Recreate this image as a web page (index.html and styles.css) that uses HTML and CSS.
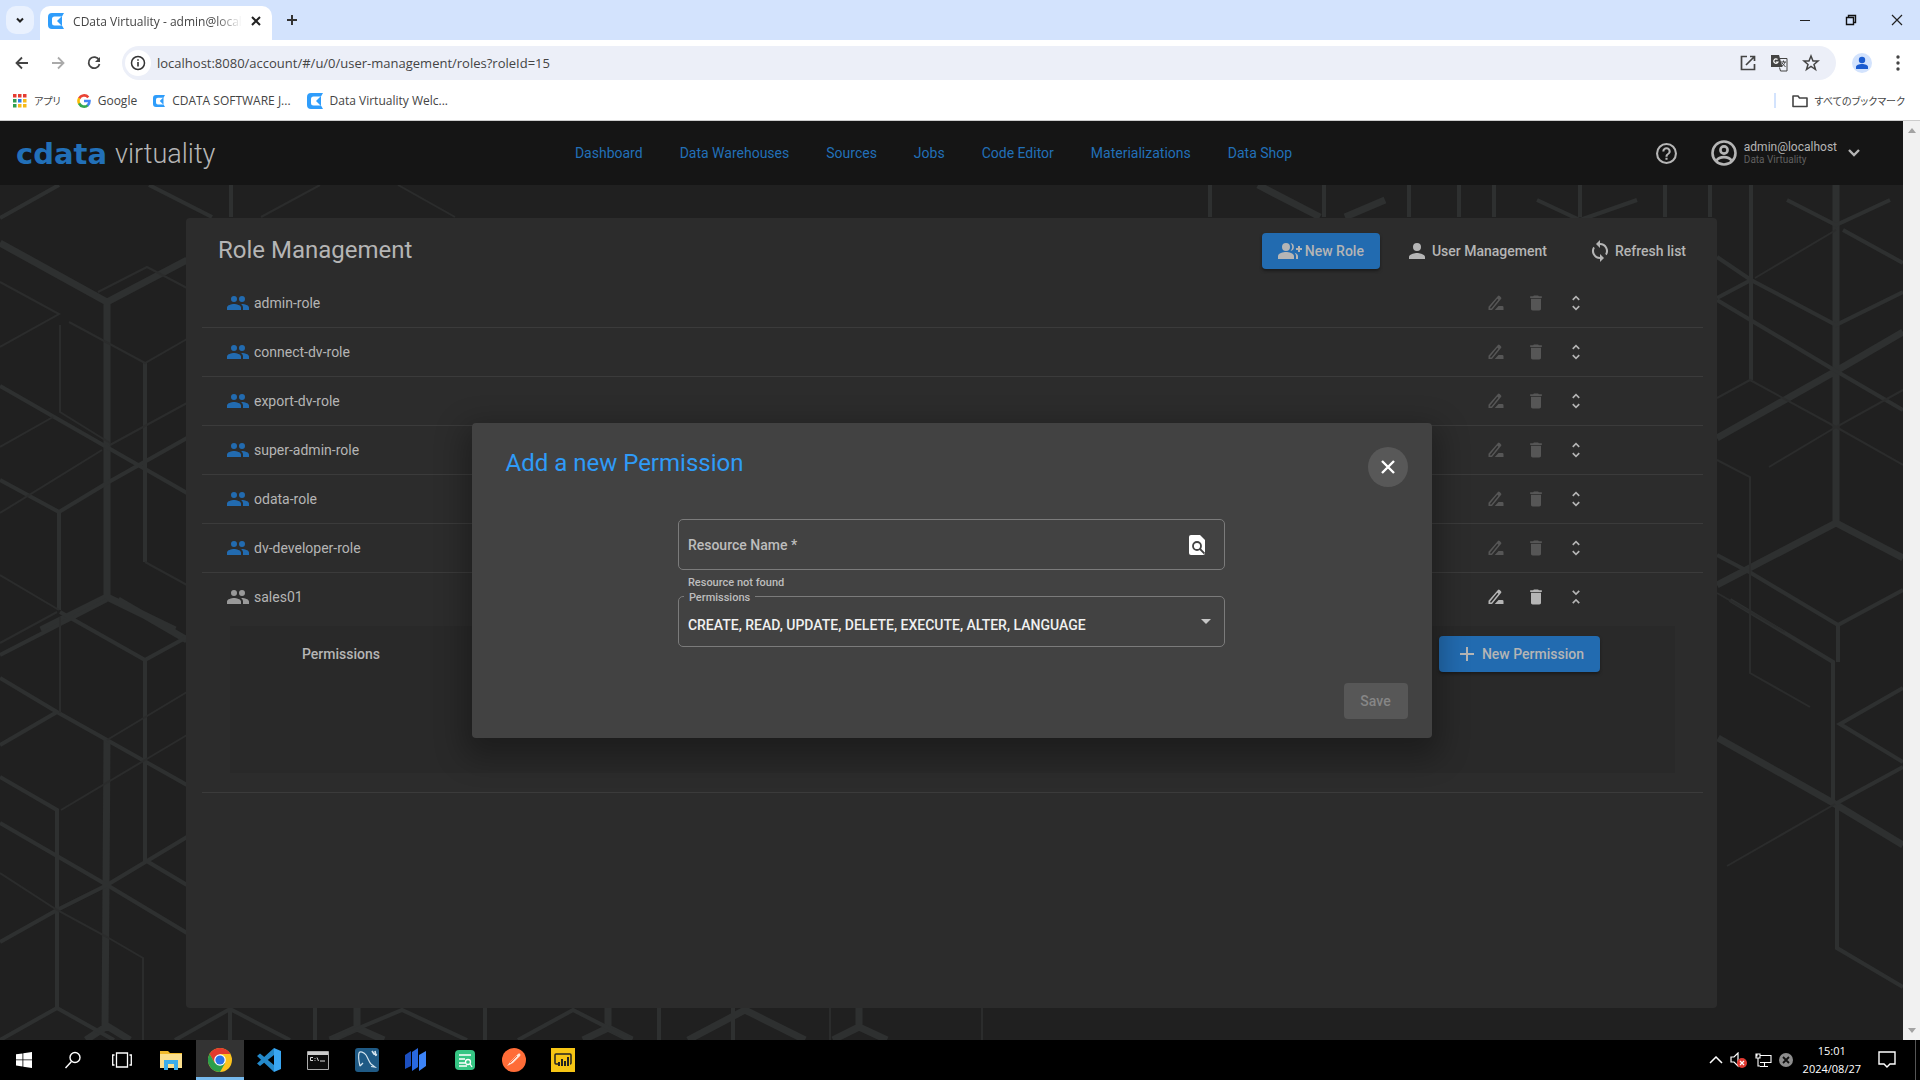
FILE: index.html
```html
<!DOCTYPE html>
<html lang="ja">
<head>
<meta charset="utf-8">
<meta name="viewport" content="width=device-width, initial-scale=1">
<title>CData Virtuality - admin@localhost</title>
<link rel="stylesheet" href="styles.css">
</head>
<body>
<svg class="defs" aria-hidden="true">
  <symbol id="i-people" viewBox="0 0 24 24"><path d="M16 11a3 3 0 1 0 0-6 3 3 0 0 0 0 6zm-8 0a3 3 0 1 0 0-6 3 3 0 0 0 0 6zm0 2c-2.330 0-7 1.170-7 3.500V19h14v-2.500C15 14.170 10.330 13 8 13zm8 0c-.290 0-.620.020-.970.050C16.190 13.890 17 15.020 17 16.500V19h6v-2.500c0-2.330-4.670-3.500-7-3.500z"/></symbol>
  <symbol id="i-addgroup" viewBox="0 0 24 24"><path d="M22 9V7h-2v2h-2v2h2v2h2v-2h2V9zM8 12a4 4 0 1 0 0-8 4 4 0 0 0 0 8zm0 1c-2.670 0-8 1.340-8 4v3h16v-3c0-2.660-5.330-4-8-4zm4.510-8.950a5.980 5.980 0 0 1 0 7.900 4 4 0 0 0 0-7.900zm4.020 9.780C17.420 14.660 18 15.700 18 17v3h2v-3c0-1.450-1.590-2.510-3.470-3.170z"/></symbol>
  <symbol id="i-person" viewBox="0 0 24 24"><path d="M12 12a4 4 0 1 0 0-8 4 4 0 0 0 0 8zm0 2c-2.670 0-8 1.340-8 4v2h16v-2c0-2.660-5.330-4-8-4z"/></symbol>
  <symbol id="i-sync" viewBox="0 0 24 24"><path d="M12 4V1L8 5l4 4V6a6 6 0 0 1 5.240 8.910l1.460 1.460A8 8 0 0 0 12 4zm0 14a6 6 0 0 1-5.240-8.910L5.300 7.630A8 8 0 0 0 12 20v3l4-4-4-4z"/></symbol>
  <symbol id="i-pencil" viewBox="0 0 24 24"><path fill-rule="evenodd" d="M14.300 3.500a1.500 1.500 0 0 1 2.100 0l1.600 1.600a1.500 1.500 0 0 1 0 2.100L7.200 20.500H3v-4zM5 17.300v1.300h1.400L14.900 8.200 13.500 6.800zM15 15.500h4.500a1.500 1.500 0 0 1 1.500 1.500v3.500H10.500z"/></symbol>
  <symbol id="i-trash" viewBox="0 0 24 24"><path d="M6 19c0 1.100.900 2 2 2h8c1.100 0 2-.900 2-2V7H6zM19 4h-3.500l-1-1h-5l-1 1H5v2h14z"/></symbol>
  <symbol id="i-more" viewBox="0 0 24 24"><path d="M12 5.830 15.170 9l1.410-1.410L12 3 7.410 7.590 8.830 9zm0 12.340L8.830 15l-1.410 1.410L12 21l4.590-4.590L15.170 15z"/></symbol>
  <symbol id="i-less" viewBox="0 0 24 24"><path d="M7.410 18.590 8.830 20 12 16.830 15.170 20l1.410-1.410L12 14zM16.590 5.410 15.170 4 12 7.170 8.830 4 7.410 5.410 12 10z"/></symbol>
  <symbol id="i-cdata" viewBox="0 0 16 16"><path fill="#2f9dfb" d="M4 0h12l-2 3.500H6.500A2.500 2.500 0 0 0 4 6v4a2.500 2.500 0 0 0 2.500 2.500H14l2 3.500H4a4 4 0 0 1-4-4V4a4 4 0 0 1 4-4z"/><path fill="#2f9dfb" d="M14 3v10L9 8z"/></symbol>
</svg>

<header class="browser">
  <div class="tabstrip">
    <button class="tabsearch" aria-label="Search tabs"><svg viewBox="0 0 12 12" width="12" height="12"><path d="m3 4.500 3 3 3-3" fill="none" stroke="#222" stroke-width="2"/></svg></button>
    <div class="tab">
      <svg width="16" height="16"><use href="#i-cdata"/></svg>
      <span class="tabtitle">CData Virtuality - admin@local</span>
      <button class="plain" aria-label="Close tab"><svg viewBox="0 0 10 10" width="10" height="10"><path d="m1 1 8 8m0-8L1 9" stroke="#222" stroke-width="2"/></svg></button>
    </div>
    <button class="plain newtab" aria-label="New tab"><svg viewBox="0 0 12 12" width="12" height="12"><path d="M6 1v10M1 6h10" stroke="#333" stroke-width="2"/></svg></button>
    <div class="winctl">
      <button class="plain" aria-label="Minimize"><svg width="12" height="12"><path d="M1 6.500h10" stroke="#222"/></svg></button>
      <button class="plain" aria-label="Restore"><svg width="12" height="12"><path d="M1.500 3.500h7v7h-7zM3.500 3V1.500h7v7H9" fill="none" stroke="#111" stroke-width="1.400"/></svg></button>
      <button class="plain" aria-label="Close"><svg width="12" height="12"><path d="m1 1 10 10m0-10L1 11" stroke="#222" stroke-width="1.200"/></svg></button>
    </div>
  </div>
  <div class="toolbar">
    <button class="plain" aria-label="Back"><svg width="16" height="16"><path d="M14 8H3m5-5.500L2.500 8 8 13.500" fill="none" stroke="#444" stroke-width="1.800"/></svg></button>
    <button class="plain" aria-label="Forward" disabled><svg width="16" height="16"><path d="M2 8h11M8 2.500 13.500 8 8 13.500" fill="none" stroke="#aaa" stroke-width="1.800"/></svg></button>
    <button class="plain" aria-label="Reload"><svg width="16" height="16"><path d="M13 5a5.500 5.500 0 1 0 .500 4" fill="none" stroke="#444" stroke-width="1.800"/><path d="M14 2v5H9z" fill="#444"/></svg></button>
    <div class="omnibox">
      <span class="siteinfo"><svg width="16" height="16"><circle cx="8" cy="8" r="6.500" fill="none" stroke="#333" stroke-width="1.500"/><path d="M8 7v4.500M8 4.200v1.600" stroke="#333" stroke-width="1.600"/></svg></span>
      <input class="url" aria-label="Address" value="localhost:8080/account/#/u/0/user-management/roles?roleId=15">
      <button class="plain" aria-label="Open"><svg width="16" height="16"><path d="M7 1.500H1.500v13h13V9M10 1.500h4.500V6M14 2 6 10" fill="none" stroke="#444" stroke-width="1.700"/></svg></button>
      <button class="plain" aria-label="Translate"><svg width="18" height="18"><path fill="#444" d="M1 1h8l3.500 12H1z"/><path d="M9.500 4.500H17V17h-6.500l-1-3.500" fill="none" stroke="#444"/><path d="M7.500 5.500A2.200 2.200 0 1 0 8 8H5.800" fill="none" stroke="#fff" stroke-width="1.200"/><path d="M11 8h5m-2.500-1.500V8m1.500 0c-.5 2-2 3.500-3 4m0-3 3.500 4" fill="none" stroke="#444"/></svg></button>
      <button class="plain" aria-label="Bookmark"><svg width="18" height="18"><path d="m9 2 2 5h5l-4 3.400 1.500 5.100L9 12.500l-4.500 3L6 10.400 2 7h5z" fill="none" stroke="#444" stroke-width="1.500"/></svg></button>
    </div>
    <button class="avatar" aria-label="Profile"><svg width="14" height="14" fill="#1b5cd0"><circle cx="7" cy="4" r="3.200"/><path d="M1 13v-2c0-2 3-3 6-3s6 1 6 3v2z"/></svg></button>
    <button class="plain dots" aria-label="Menu"><svg width="4" height="16" fill="#444"><circle cx="2" cy="2" r="1.700"/><circle cx="2" cy="8" r="1.700"/><circle cx="2" cy="14" r="1.700"/></svg></button>
  </div>
  <nav class="bookmarks" aria-label="Bookmarks">
    <a href="#apps"><svg width="14" height="14"><path fill="#e53b30" d="M0 0h3.500v3.500H0zM5 0h3.500v3.500H5zM10 0h3.500v3.500H10z"/><path fill="#2f9e50" d="M0 5h3.500v3.500H0zM0 10h3.500v3.500H0z"/><path fill="#2c7be5" d="M5 5h3.500v3.500H5z"/><path fill="#f5b919" d="M10 5h3.500v3.500H10zM5 10h3.500v3.500H5zM10 10h3.500v3.500H10z"/></svg><span class="jp">アプリ</span></a>
    <a href="#google"><svg width="14" height="14" fill="none" stroke-width="2.600"><path stroke="#ea4335" d="M11.300 3.300A5.500 5.500 0 0 0 2.100 4.600"/><path stroke="#fbbc05" d="M2.300 4.200a5.500 5.500 0 0 0 0 5.600"/><path stroke="#34a853" d="M2.100 9.400a5.500 5.500 0 0 0 8.800 1.700"/><path stroke="#4285f4" d="M7 7h5.500a5.500 5.500 0 0 1-1.900 4.400"/></svg>Google</a>
    <a href="#cdata"><svg width="12" height="12"><use href="#i-cdata"/></svg>CDATA SOFTWARE J...</a>
    <a href="#dv"><svg width="16" height="16"><use href="#i-cdata"/></svg>Data Virtuality Welc...</a>
    <a class="allmarks" href="#all"><svg width="16" height="14"><path d="M1 2h5l1.500 2H15v8.500H1z" fill="none" stroke="#444" stroke-width="1.600" stroke-linejoin="round"/></svg><span class="jp">すべてのブックマーク</span></a>
  </nav>
</header>

<div class="viewport">
  <div class="app">
    <svg class="pattern" viewBox="0 185 1903 855" preserveAspectRatio="xMidYMid slice" aria-hidden="true">
      <g class="thick">
        <path d="M0 243 107 302 187 260M107 302V597M41 630 107 597 175 630M118 600 187 640M107 740 105 1030M86 1040 107 1026 130 1040M1717 585 1836 523 1903 558M1718 738 1835 804 1903 845M1836 185V523M1258 185 1320 217M357 1008V1028L384 1040M357 1028 330 1040M608 1008V1028L632 1040M608 1028 583 1040M859 1008V1027L887 1040M859 1027 833 1040M688 1040 745 1010 805 1040M1903 332 1836 371 1717 438M1385 200 1345 217"/>
      </g>
      <g class="mid">
        <path d="M0 218 59 185M149 185 212 217M231 185V217M0 386 187 493M0 480 59 512 107 483 187 438M59 512V610M0 655 107 600M60 612 145 660 187 637M145 363V562M0 678 57 712 107 740 187 785M0 745 57 712M145 660V860L187 885M0 777 57 810V1007M0 823 107 885 187 933M107 885 187 837M107 885 57 910 0 942M0 1040 57 1008 114 1040M175 1040 230 1009 290 1040M230 1009V1040M330 1040 402 1010 467 1040M518 1040 573 1010 632 1040M315 1008V1040M485 1008V1040M659 1008V1040M733 1008V1040M1210 185V217M1324 185V217M1409 185V217M1459 185V217M1494 185V217M1580 185V217M1665 185V217M1710 185V217M1537 200 1580 220 1637 200M1787 200 1836 225 1890 200M1843 230 1903 263M1751 185V380M1717 257 1751 280 1836 325 1903 292M1751 280 1717 298M1717 300 1836 371 1903 410M1717 555 1751 573 1838 625 1903 590M1730 600 1833 662V804M1838 625V662M1903 688 1840 724 1903 762M1903 767 1835 804M1837 806V948L1903 987"/>
      </g>
      <g class="thin">
        <path d="M320 185 261 217M398 185 455 217M830 1008V1040M982 1008V1040M98 292 147 267 187 288M0 282 59 314 0 347M60 325V412L110 443M69 322 145 363 187 339M145 562 187 585M0 447 53 417M187 403 110 445M102 450 0 513M0 575 59 610M0 643 57 612M60 617V713M107 740 187 692M145 760 187 735M61 810 145 760M0 873 57 910 107 937 143 958V1040M1836 230 1755 278M1717 398 1750 380 1836 427 1903 465M1903 390 1836 427 1769 467M1717 460 1750 477V673L1810 707M1717 593 1785 632M1835 804 1727 866"/>
      </g>
    </svg>

    <header class="appbar">
      <a class="brand" href="#home"><span class="brand-c">cdata</span><span class="brand-v">virtuality</span></a>
      <nav class="mainnav">
        <a href="#dashboard">Dashboard</a><a href="#warehouses">Data Warehouses</a><a href="#sources">Sources</a><a href="#jobs">Jobs</a><a href="#editor">Code Editor</a><a href="#mat">Materializations</a><a href="#shop">Data Shop</a>
      </nav>
      <div class="account">
        <button class="plain" aria-label="Help"><svg viewBox="2 2 20 20" width="21" height="21" fill="#b5b5b5"><path d="M11 18h2v-2h-2zm1-16a10 10 0 1 0 0 20 10 10 0 0 0 0-20zm0 18a8 8 0 1 1 0-16 8 8 0 0 1 0 16zm0-14a4 4 0 0 0-4 4h2c0-1.100.900-2 2-2s2 .900 2 2c0 2-3 1.750-3 5h2c0-2.250 3-2.500 3-5a4 4 0 0 0-4-4z"/></svg></button>
        <button class="userbtn">
          <svg width="26" height="26" fill="none" stroke="#b5b5b5" stroke-width="2.600"><circle cx="13" cy="13" r="11.500"/><circle cx="13" cy="10" r="3.600"/><path d="M5.500 20.500c3-4.500 12-4.500 15 0"/></svg>
          <span class="who"><span class="name">admin@localhost</span><span class="org">Data Virtuality</span></span>
          <svg width="14" height="10"><path d="m2 2 5 5 5-5" fill="none" stroke="#b5b5b5" stroke-width="2.400"/></svg>
        </button>
      </div>
    </header>

    <main class="card">
      <div class="cardhead">
        <h1>Role Management</h1>
        <button class="btn primary"><svg width="24" height="24"><use href="#i-addgroup"/></svg>New Role</button>
        <button class="btn flat"><svg width="24" height="24"><use href="#i-person"/></svg>User Management</button>
        <button class="btn flat"><svg width="24" height="24"><use href="#i-sync"/></svg>Refresh list</button>
      </div>
      <ul class="roles">
        <li class="role"><svg class="ppl"><use href="#i-people"/></svg><span>admin-role</span><button disabled aria-label="Edit"><svg><use href="#i-pencil"/></svg></button><button disabled aria-label="Delete"><svg><use href="#i-trash"/></svg></button><button aria-label="Expand"><svg><use href="#i-more"/></svg></button></li>
        <li class="role"><svg class="ppl"><use href="#i-people"/></svg><span>connect-dv-role</span><button disabled aria-label="Edit"><svg><use href="#i-pencil"/></svg></button><button disabled aria-label="Delete"><svg><use href="#i-trash"/></svg></button><button aria-label="Expand"><svg><use href="#i-more"/></svg></button></li>
        <li class="role"><svg class="ppl"><use href="#i-people"/></svg><span>export-dv-role</span><button disabled aria-label="Edit"><svg><use href="#i-pencil"/></svg></button><button disabled aria-label="Delete"><svg><use href="#i-trash"/></svg></button><button aria-label="Expand"><svg><use href="#i-more"/></svg></button></li>
        <li class="role"><svg class="ppl"><use href="#i-people"/></svg><span>super-admin-role</span><button disabled aria-label="Edit"><svg><use href="#i-pencil"/></svg></button><button disabled aria-label="Delete"><svg><use href="#i-trash"/></svg></button><button aria-label="Expand"><svg><use href="#i-more"/></svg></button></li>
        <li class="role"><svg class="ppl"><use href="#i-people"/></svg><span>odata-role</span><button disabled aria-label="Edit"><svg><use href="#i-pencil"/></svg></button><button disabled aria-label="Delete"><svg><use href="#i-trash"/></svg></button><button aria-label="Expand"><svg><use href="#i-more"/></svg></button></li>
        <li class="role"><svg class="ppl"><use href="#i-people"/></svg><span>dv-developer-role</span><button disabled aria-label="Edit"><svg><use href="#i-pencil"/></svg></button><button disabled aria-label="Delete"><svg><use href="#i-trash"/></svg></button><button aria-label="Expand"><svg><use href="#i-more"/></svg></button></li>
        <li class="open">
          <div class="role"><svg class="ppl custom"><use href="#i-people"/></svg><span>sales01</span><button aria-label="Edit"><svg><use href="#i-pencil"/></svg></button><button aria-label="Delete"><svg><use href="#i-trash"/></svg></button><button aria-label="Collapse"><svg><use href="#i-less"/></svg></button></div>
          <section class="perms">
            <h2>Permissions</h2>
            <button class="btn primary"><svg width="24" height="24"><path d="M12 5v14M5 12h14" stroke="#b5b5b5" stroke-width="2"/></svg>New Permission</button>
          </section>
        </li>
      </ul>
    </main>

    <div class="overlay">
      <form class="dialog" role="dialog" aria-labelledby="dlg-title">
        <div class="dlghead">
          <h2 id="dlg-title">Add a new Permission</h2>
          <button type="button" class="close" aria-label="Close"><svg width="16" height="16"><path d="m2 2 12 12m0-12L2 14" stroke="#fff" stroke-width="2.400"/></svg></button>
        </div>
        <div class="fields">
          <div class="field">
            <input id="res" type="text" placeholder="Resource Name *" aria-label="Resource Name">
            <svg viewBox="0 0 16 20" width="16" height="20"><path fill="#fff" d="M2 0h9l5 5v13a2 2 0 0 1-2 2H2a2 2 0 0 1-2-2V2a2 2 0 0 1 2-2z"/><circle cx="8" cy="11" r="4" fill="none" stroke="#424242" stroke-width="1.800"/><path d="m11 14 4.500 4.500" stroke="#424242" stroke-width="1.800"/></svg>
          </div>
          <p class="hint">Resource not found</p>
          <div class="field selectfield">
            <label for="perm">Permissions</label>
            <select id="perm"><option>CREATE, READ, UPDATE, DELETE, EXECUTE, ALTER, LANGUAGE</option></select>
            <svg width="10" height="5"><path d="M0 0h10L5 5z" fill="#c6c6c6"/></svg>
          </div>
        </div>
        <div class="dlgfoot"><button class="btn save" disabled>Save</button></div>
      </form>
    </div>
  </div>
  <div class="scrollbar" aria-hidden="true">
    <svg width="8" height="5"><path d="M0 5h8L4 0z" fill="#a3a3a3"/></svg>
    <svg width="8" height="5"><path d="M0 0h8L4 5z" fill="#a3a3a3"/></svg>
  </div>
</div>

<footer class="taskbar">
  <div class="pinned">
    <button aria-label="Start"><svg width="16" height="18" viewBox="0 0 16 16" fill="#fff"><path d="m0 2.300 6.500-.900v6.100H0zM7.300 1.300 16 0v7.500H7.300zM0 8.300h6.500v6.200L0 13.600zM7.300 8.300H16V16l-8.700-1.300z"/></svg></button>
    <button aria-label="Search"><svg width="18" height="18" fill="none" stroke="#fff" stroke-width="1.400"><circle cx="11" cy="6.500" r="5"/><path d="m7.500 10.500-6 6.500"/></svg></button>
    <button aria-label="Task view"><svg width="20" height="16" fill="none" stroke="#fff" stroke-width="1.300"><path d="M4.500 1h11v14h-11zM2.500 3H.700v10h1.800M17.500 3h1.800v10h-1.800"/></svg></button>
    <button aria-label="Explorer"><svg width="22" height="20"><path fill="#f0b92c" d="M0 1h8l2 2h12v4H0z"/><path fill="#fbdf8d" d="M0 4h22v14H0z"/><path fill="#3badea" d="M4 10h14v10h-4v-6H8v6H4z"/></svg></button>
    <button class="active" aria-label="Chrome"><svg width="24" height="24" viewBox="0 0 24 24"><circle cx="12" cy="12" r="12" fill="#fcc31e"/><path fill="#e33b2e" d="M1.600 6A12 12 0 0 1 22.400 6H12l-5.200 9z"/><path fill="#2b9f4b" d="M1.600 6A12 12 0 0 0 12 24l5.200-9H6.800z"/><circle cx="12" cy="12" r="5.800" fill="#fff"/><circle cx="12" cy="12" r="4.600" fill="#2b74e8"/></svg></button>
    <button aria-label="VS Code"><svg width="24" height="24"><path fill="#2489ca" d="m17 0 0 7L3 18l-3-2.500zM0 8l3-2.500L17 17v7z"/><path fill="#39a6f2" d="m17 0 7 3v18l-7 3z"/></svg></button>
    <button aria-label="Command Prompt"><svg width="22" height="19"><path fill="#0c0c0c" stroke="#aaa" d="M.500.500h21v18H.500z"/><path fill="#ccc" d="M1 1h20v3H1z"/><path d="M6 6.500H3.500v3H6M8 7v.800M8 9v.800M10 6.500l1.500 3.500M13 10h5" fill="none" stroke="#ddd"/></svg></button>
    <button aria-label="MySQL Workbench"><svg width="24" height="24"><rect width="24" height="24" rx="3" fill="#1f5a85"/><path d="M5 18c-1-4-2-9-1-13 1-2 5-1 7 2s3 7 5 9l4 3-4-.500M5 18l3-3" fill="none" stroke="#d5e5ef" stroke-width="1.200"/><path d="m17 3 2 3 3 1m-2-4 1 5" fill="none" stroke="#d5e5ef" stroke-width="1.600"/></svg></button>
    <button aria-label="Studio"><svg width="22" height="24"><path fill="#1c4fc0" d="m0 7 6-4v15l-6 3z"/><path fill="#2868e0" d="m7 4 6-4v19l-6 4z"/><path fill="#3c83f6" d="m14 7 7-4v15l-7 5z"/></svg></button>
    <button aria-label="Notes"><svg width="20" height="20"><rect width="20" height="20" rx="4" fill="#35c583"/><path d="M4 5h12M4 9h6M4 13h6M4 16h8" stroke="#fff" stroke-width="1.400"/><circle cx="13" cy="12" r="2.500" fill="none" stroke="#fff" stroke-width="1.300"/><path d="m15 14 2 3" stroke="#fff" stroke-width="1.300"/></svg></button>
    <button aria-label="Postman"><svg width="24" height="24"><circle cx="12" cy="12" r="12" fill="#ff6c37"/><path d="m5 18 4-5 7-7c2-1 3 0 2 2l-7 7z" fill="#fde5d9"/><path d="m8 15 7-7" stroke="#ff6c37"/></svg></button>
    <button aria-label="Power BI"><svg width="24" height="24"><path fill="#f6c514" d="M0 0h24v24H0z"/><path d="M7 16H5a1 1 0 0 1-1-1V7a1 1 0 0 1 1-1h14a1 1 0 0 1 1 1v8a1 1 0 0 1-1 1" fill="none" stroke="#222" stroke-width="1.500"/><path d="M8 14v4M11 11v7M14 13v5M17 9v9" stroke="#222" stroke-width="2"/></svg></button>
  </div>
  <div class="tray">
    <svg width="14" height="8"><path d="m1 7 6-6 6 6" fill="none" stroke="#fff" stroke-width="1.500"/></svg>
    <svg width="18" height="16"><path d="M1 5h3l4-4v13l-4-4H1z" fill="none" stroke="#fff" stroke-width="1.200"/><circle cx="12" cy="11" r="5" fill="#e03a32"/><path d="m10 9 4 4m0-4-4 4" stroke="#fff" stroke-width="1.200"/></svg>
    <svg width="17" height="14"><path d="M4.500 2.500H16v7H5M9.500 10v3M5 13.500h8M2 .500v3M1 1h4v4H1zM3 5v8h2" fill="none" stroke="#fff" stroke-width="1.100"/></svg>
    <svg width="14" height="14"><circle cx="7" cy="7" r="7" fill="#8d8d8d"/><path d="m4 4 6 6m0-6-6 6" stroke="#111" stroke-width="1.800"/></svg>
    <div class="clock"><time>15:01</time><time>2024/08/27</time></div>
    <svg width="18" height="18"><path d="M1 1h16v12h-5l-3 3-3-3H1z" fill="none" stroke="#fff" stroke-width="1.400"/></svg>
    <span class="peek"></span>
  </div>
</footer>
</body>
</html>
```
FILE: styles.css
```css
* { box-sizing: border-box; }
html, body { margin: 0; }
body {
  display: flex;
  flex-direction: column;
  min-height: 100vh;
  font-family: Roboto, "Noto Sans CJK JP", sans-serif;
  font-size: 14px;
  background: #202020;
}
h1, h2, p, ul { margin: 0; padding: 0; font-weight: 400; }
ul { list-style: none; }
a { color: inherit; text-decoration: none; }
button, input, select { font: inherit; color: inherit; border: 0; background: none; padding: 0; margin: 0; }
svg { display: block; flex: none; }
.defs { position: absolute; width: 0; height: 0; }
.plain { display: flex; align-items: center; justify-content: center; }

/* Browser frame */
.browser {
  background: #fff;
  color: #444;
  font-family: "Open Sans", "Noto Sans CJK JP", sans-serif;
  font-size: 12px;
  border-bottom: 1px solid #ccc;
}
.tabstrip { display: flex; align-items: flex-start; height: 40px; padding: 6px 17px 0 6px; background: #d3e3fd; }
.tabsearch { display: flex; align-items: center; justify-content: center; width: 28px; height: 28px; border-radius: 10px; background: #e9f1fe; }
.tab { display: flex; align-items: center; justify-content: space-between; width: 232px; height: 34px; margin-left: 6px; padding: 0 11px 4px 8px; border-radius: 10px 10px 0 0; background: #fff; }
.tabtitle { white-space: nowrap; -webkit-mask-image: linear-gradient(90deg, #000 84%, transparent); mask-image: linear-gradient(90deg, #000 84%, transparent); }
.newtab { width: 28px; height: 28px; margin-left: 6px; }
.winctl { display: flex; gap: 34px; height: 28px; margin-left: auto; }
.toolbar { display: flex; align-items: center; gap: 20px; height: 46px; padding: 0 20px 0 14px; }
.omnibox { display: flex; align-items: center; flex: 1; gap: 14px; height: 34px; padding: 0 16px 0 3px; border-radius: 17px; background: #eceff8; }
.siteinfo { display: flex; align-items: center; justify-content: center; width: 26px; height: 26px; border-radius: 50%; background: #fff; }
.toolbar .avatar { margin-left: -4px; margin-right: 4px; }
.url { flex: 1; margin-left: -8px; font-size: 13px; height: 26px; }
.avatar { display: flex; align-items: center; justify-content: center; width: 20px; height: 20px; border-radius: 50%; background: #d3e3fd; }
.bookmarks { display: flex; align-items: center; gap: 16px; height: 34px; padding: 0 15px 5px 13px; }
.bookmarks a { display: flex; align-items: center; gap: 7px; }
.bookmarks .allmarks { margin-left: auto; border-left: 2px solid #d3e3fd; padding-left: 16px; }
.jp { font-family: "Noto Sans CJK JP", sans-serif; font-size: 10px; font-feature-settings: "palt"; }

/* Application */
.viewport { display: flex; flex: 1; }
.app { position: relative; display: flex; flex-direction: column; flex: 1; color: #b5b5b5; }
.pattern { position: absolute; left: 0; right: 0; bottom: 0; top: 64px; width: 100%; height: calc(100% - 64px); fill: none; stroke: #2e3030; }
.thick { stroke-width: 7; }
.mid { stroke-width: 4; }
.thin { stroke-width: 2; stroke: #2b2c2c; }
.appbar { position: relative; display: flex; align-items: center; justify-content: space-between; height: 64px; padding: 0 42px 0 16px; background: #151515; }
.brand, .account { flex: 1; display: flex; align-items: center; }
.brand { gap: 8px; padding-top: 2px; }
.brand-c { font: bold 29px/32px "DejaVu Sans", sans-serif; color: #2270b8; }
.brand-v { font-size: 27px; line-height: 32px; font-weight: 300; }
.mainnav { display: flex; gap: 37px; color: #2270b8; padding-right: 10px; }
.account { justify-content: flex-end; gap: 34px; }
.userbtn { display: flex; align-items: center; gap: 7px; text-align: left; }
.who { display: flex; flex-direction: column; margin-right: 3px; }
.name { font-size: 12px; line-height: 14px; }
.org { font-size: 10px; line-height: 12px; color: #606060; }
.card { position: relative; flex: 1; margin: 33px 186px 32px; padding: 15px 14px 15px 16px; border-radius: 4px; background: #2c2c2c; }
.cardhead { display: flex; align-items: center; height: 36px; padding: 0 17px 0 16px; }
h1 { flex: 1; padding-bottom: 3px; font-size: 24px; line-height: 32px; }
.btn { display: flex; align-items: center; justify-content: center; height: 36px; padding: 0 16px; border-radius: 4px; font-weight: 500; }
.btn svg { fill: #b5b5b5; }
.primary { background: #226bb0; box-shadow: 0 2px 3px #1b1b1b; gap: 3px; }
.flat { margin-left: 9px; gap: 3px; }
.cardhead .flat:last-child { padding-right: 0; }
.roles { padding-top: 10px; }
.role { display: flex; align-items: center; height: 49px; padding: 0 117px 0 24px; border-bottom: 1px solid #3b3b3b; }
.role span { flex: 1; margin-left: 4px; }
.role svg { width: 20px; height: 20px; fill: #b5b5b5; }
.role .ppl { width: 24px; height: 24px; fill: #226bb0; }
.role .custom { fill: #999; }
.role button { display: flex; margin-left: 20px; }
.role button:disabled svg { fill: #565656; }
.open { padding-bottom: 19px; border-bottom: 1px solid #3b3b3b; }
.open .role { height: 48px; border: 0; }
.perms { display: flex; align-items: flex-start; justify-content: space-between; height: 147px; margin: 5px 28px 0; padding: 10px 75px 0 72px; background: #292929; }
.perms h2 { font-size: 14px; line-height: 36px; font-weight: 500; }

/* Dialog */
.overlay { position: absolute; inset: 0; display: flex; align-items: center; justify-content: center; }
.dialog { width: 960px; max-width: 80%; padding: 24px 24px 19px; border-radius: 4px; background: #424242; box-shadow: 0 11px 30px 8px rgba(0, 0, 0, .3); }
.dlghead { display: flex; justify-content: space-between; padding-left: 10px; }
.dlghead h2 { font-size: 24px; line-height: 32px; color: #2f9bf7; }
.close { display: flex; align-items: center; justify-content: center; width: 40px; height: 40px; border-radius: 50%; background: #585858; }
.fields { width: 60%; margin: 32px auto 0; }
.field { position: relative; display: flex; align-items: center; height: 51px; padding: 0 19px 0 9px; border: 1px solid #7b7b7b; border-radius: 5px; font-weight: 500; }
.field input, .field select { flex: 1; min-width: 0; height: 40px; appearance: none; outline: none; }
.field input::placeholder { color: #bdbdbd; opacity: 1; }
.hint { padding: 5px 10px 5px; font-size: 11px; line-height: 16px; font-weight: 500; color: #bdbdbd; }
.selectfield { padding-right: 13px; color: #f0f0f0; }
.field select { padding: 6px 0 0; }
.selectfield label { position: absolute; top: -6px; left: 5px; padding: 0 5px; background: #424242; font-size: 11px; line-height: 14px; color: #bdbdbd; }
.dlgfoot { display: flex; justify-content: flex-end; margin-top: 36px; }
.save { width: 64px; background: #575757; color: #868686; }

.scrollbar { display: flex; flex-direction: column; justify-content: space-between; align-items: center; width: 17px; padding: 7px 0; background: #f1f1f1; }

/* Taskbar */
.taskbar { display: flex; justify-content: space-between; height: 40px; background: #000; color: #fff; font-family: "Open Sans", sans-serif; font-size: 12px; }
.pinned { display: flex; gap: 1px; }
.pinned button { display: flex; align-items: center; justify-content: center; width: 48px; border-bottom: 3px solid transparent; border-top: 3px solid transparent; }
.pinned .active { background: #333; border-bottom-color: #76b9ed; border-top-color: #333; }
.tray { display: flex; align-items: center; gap: 7px; }
.clock { display: flex; flex-direction: column; align-items: center; line-height: 18px; margin: 0 10px 0 3px; font-size: 11px; }
.peek { width: 5px; height: 40px; margin-left: 12px; border-left: 1px solid #555; }
```
